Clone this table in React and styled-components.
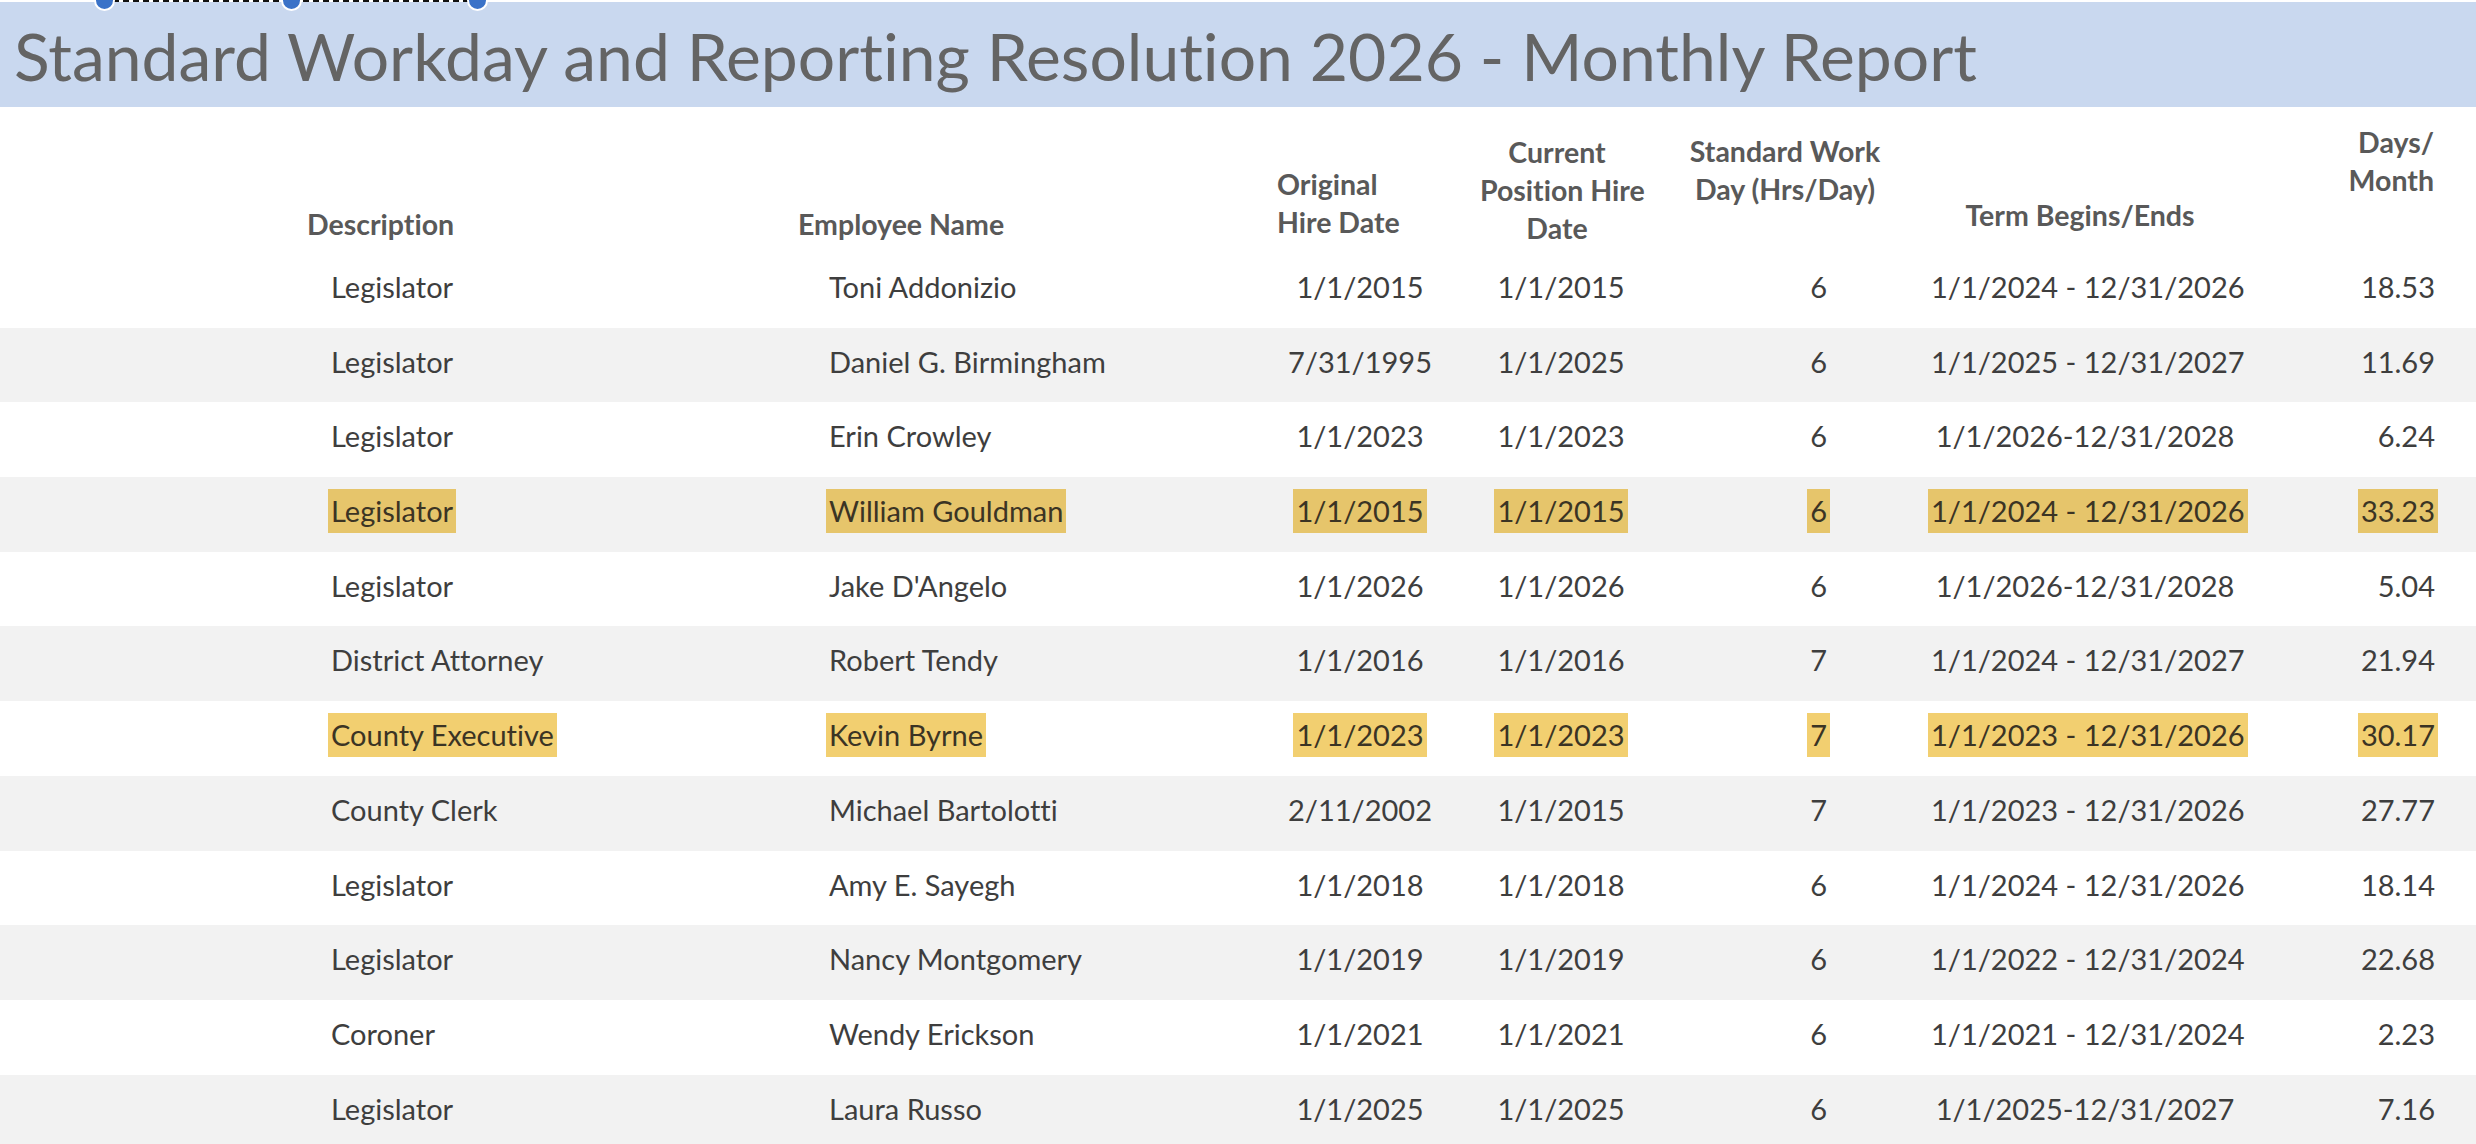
import React from 'react';
import styled, { createGlobalStyle } from 'styled-components';

const Global = createGlobalStyle`
  html, body { margin: 0; padding: 0; background: #ffffff; }
  body {
    font-family: Lato, "Open Sans", sans-serif;
    font-variant-ligatures: none;
    font-feature-settings: "liga" 0, "clig" 0;
  }
`;

const COLS = '780px 460px 240px 162px 286px 314px 234px';

const Page = styled.div`
  width: 2476px;
  height: 1144px;
  overflow: hidden;
  position: relative;
  background: #ffffff;
`;

const TitleBar = styled.header`
  height: 105px;
  margin-top: 2px;
  background: #c9d8ef;
  display: flex;
  align-items: flex-start;
  padding-left: 14px;
`;

const Title = styled.h1`
  margin: 0;
  font-family: Lato, sans-serif;
  font-weight: 400;
  font-size: 66px;
  line-height: 76px;
  padding-top: 16px;
  color: #646464;
  white-space: nowrap;
`;

const Selection = styled.div`
  position: absolute;
  left: 94px;
  top: -10px;
  width: 394px;
  display: flex;
  justify-content: space-between;
  align-items: center;
  &::before {
    content: '';
    position: absolute;
    left: 9px;
    right: 9px;
    top: 10px;
    border-top: 2px dashed #111;
  }
`;

const Handle = styled.span`
  position: relative;
  z-index: 1;
  width: 17px;
  height: 17px;
  border-radius: 50%;
  background: #3a72c8;
  border: 2px solid #ffffff;
`;

const HeaderRow = styled.div`
  display: grid;
  grid-template-columns: ${COLS};
  height: 146px;
  align-items: start;
`;

const HeaderCell = styled.div`
  padding-top: ${(p) => p.$top}px;
  padding-left: ${(p) => p.$pl || 0}px;
  padding-right: ${(p) => p.$pr || 0}px;
  text-align: ${(p) => p.$align};
  font-family: Lato, sans-serif;
  font-weight: 700;
  font-size: 28.5px;
  line-height: 38px;
  color: #595959;
`;

const HeaderLine = styled.div`
  white-space: nowrap;
`;

const Row = styled.div`
  display: grid;
  grid-template-columns: ${COLS};
  height: 74.7px;
  align-items: start;
  background: ${(p) => (p.$shade ? '#f2f2f2' : '#ffffff')};
`;

const Cell = styled.div`
  padding-top: 12px;
  padding-left: ${(p) => p.$pl || 0}px;
  padding-right: ${(p) => p.$pr || 0}px;
  text-align: ${(p) => p.$align};
  white-space: nowrap;
`;

const Value = styled.span`
  display: inline-block;
  height: 44px;
  line-height: 44px;
  padding: 0 3px;
  font-family: Lato, sans-serif;
  font-size: 29px;
  color: ${(p) => (p.$mark ? '#3b3424' : '#3e3e3e')};
  background: ${(p) =>
    p.$mark ? (p.$shade ? '#e6c56b' : '#f2cf70') : 'transparent'};
`;

const headers = [
  { text: ['Description'], top: 98, pl: 307, align: 'left' },
  { text: ['Employee Name'], top: 98, pl: 18, align: 'left' },
  { text: ['Original', 'Hire Date'], top: 58, pl: 37, align: 'left' },
  { text: ['Current', 'Position Hire', 'Date'], top: 26, pr: 8, align: 'center' },
  { text: ['Standard Work', 'Day (Hrs/Day)'], top: 25, align: 'center' },
  { text: ['Term Begins/Ends'], top: 89, pr: 10, align: 'center' },
  { text: ['Days/', 'Month'], top: 16, pr: 42, align: 'right' },
];

const cols = [
  { pl: 328, align: 'left' },
  { pl: 46, align: 'left' },
  { align: 'center' },
  { align: 'center' },
  { pr: 98, align: 'right' },
  { align: 'center' },
  { pr: 38, align: 'right' },
];

const rows = [
  ['Legislator', 'Toni Addonizio', '1/1/2015', '1/1/2015', '6', '1/1/2024 - 12/31/2026', '18.53'],
  ['Legislator', 'Daniel G. Birmingham', '7/31/1995', '1/1/2025', '6', '1/1/2025 - 12/31/2027', '11.69'],
  ['Legislator', 'Erin Crowley', '1/1/2023', '1/1/2023', '6', '1/1/2026-12/31/2028', '6.24'],
  ['Legislator', 'William Gouldman', '1/1/2015', '1/1/2015', '6', '1/1/2024 - 12/31/2026', '33.23', true],
  ['Legislator', "Jake D'Angelo", '1/1/2026', '1/1/2026', '6', '1/1/2026-12/31/2028', '5.04'],
  ['District Attorney', 'Robert Tendy', '1/1/2016', '1/1/2016', '7', '1/1/2024 - 12/31/2027', '21.94'],
  ['County Executive', 'Kevin Byrne', '1/1/2023', '1/1/2023', '7', '1/1/2023 - 12/31/2026', '30.17', true],
  ['County Clerk', 'Michael Bartolotti', '2/11/2002', '1/1/2015', '7', '1/1/2023 - 12/31/2026', '27.77'],
  ['Legislator', 'Amy E. Sayegh', '1/1/2018', '1/1/2018', '6', '1/1/2024 - 12/31/2026', '18.14'],
  ['Legislator', 'Nancy Montgomery', '1/1/2019', '1/1/2019', '6', '1/1/2022 - 12/31/2024', '22.68'],
  ['Coroner', 'Wendy Erickson', '1/1/2021', '1/1/2021', '6', '1/1/2021 - 12/31/2024', '2.23'],
  ['Legislator', 'Laura Russo', '1/1/2025', '1/1/2025', '6', '1/1/2025-12/31/2027', '7.16'],
];

export default function App() {
  return (
    <Page>
      <Global />
      <TitleBar>
        <Title>Standard Workday and Reporting Resolution 2026 - Monthly Report</Title>
      </TitleBar>
      <Selection>
        <Handle />
        <Handle />
        <Handle />
      </Selection>
      <HeaderRow>
        {headers.map((h, i) => (
          <HeaderCell key={i} $top={h.top} $pl={h.pl} $pr={h.pr} $align={h.align}>
            {h.text.map((t, j) => (
              <HeaderLine key={j}>{t}</HeaderLine>
            ))}
          </HeaderCell>
        ))}
      </HeaderRow>
      {rows.map((r, i) => {
        const shade = i % 2 === 1;
        const mark = !!r[7];
        return (
          <Row key={i} $shade={shade}>
            {r.slice(0, 7).map((v, j) => (
              <Cell key={j} $pl={cols[j].pl} $pr={cols[j].pr} $align={cols[j].align}>
                <Value $mark={mark} $shade={shade}>{v}</Value>
              </Cell>
            ))}
          </Row>
        );
      })}
    </Page>
  );
}
